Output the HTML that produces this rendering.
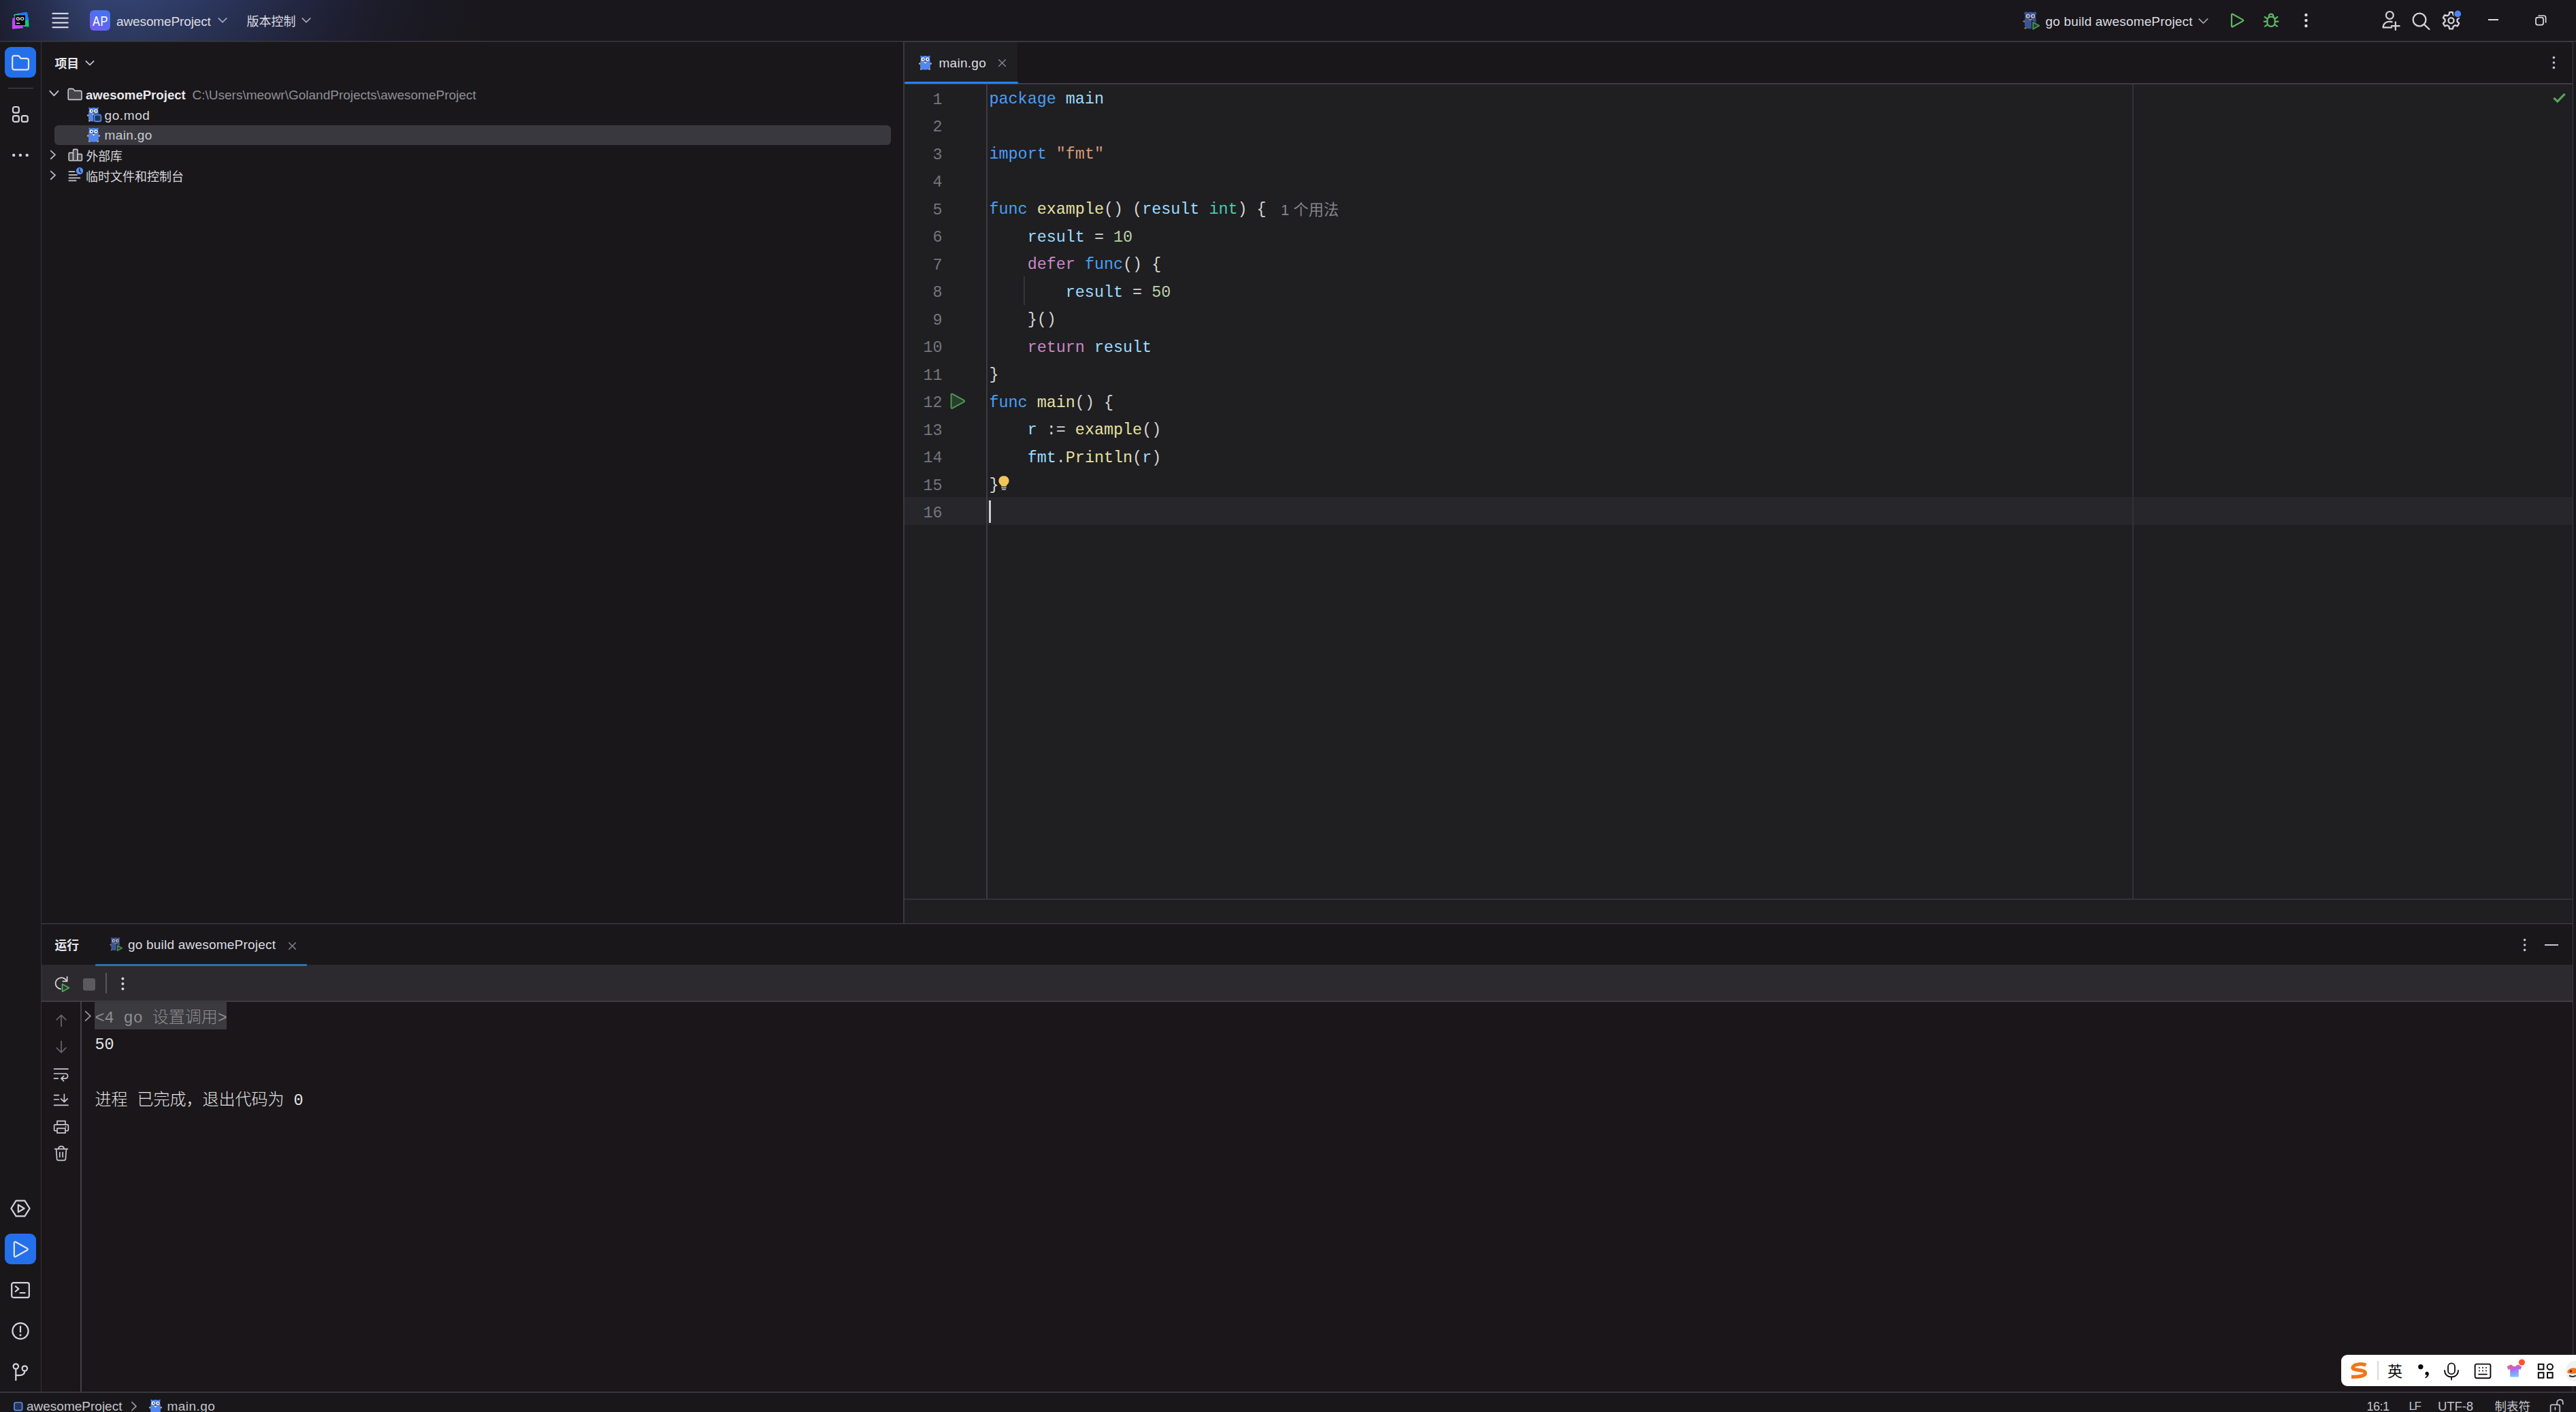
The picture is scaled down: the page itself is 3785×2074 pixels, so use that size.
<!DOCTYPE html>
<html lang="zh-CN">
<head>
<meta charset="utf-8">
<title>awesomeProject – main.go</title>
<style>
html,body{margin:0;padding:0;}
body{width:3785px;height:2074px;position:relative;overflow:hidden;background:#19171a;
  font-family:"Liberation Sans","Noto Sans CJK SC",sans-serif;font-size:19px;color:#d6d6db;}
.abs{position:absolute;}
.ln{position:absolute;background:#3a393e;}
.t{position:absolute;white-space:pre;line-height:30px;height:30px;}
svg{position:absolute;overflow:visible;}
/* title bar */
#titlebar{left:0;top:0;width:3785px;height:60px;
  background:linear-gradient(to right,#1e2035 0px,#283154 70px,#31406d 130px,#324170 200px,#2f3c66 260px,#2a345a 333px,#252a47 410px,#1f2136 488px,#1c1c2a 560px,#1a1921 640px,#19171b 740px);}
#titleshade{left:0;top:0;width:740px;height:60px;background:linear-gradient(to bottom,rgba(25,23,27,0) 0%,rgba(25,23,27,0.22) 100%);}
/* editor */
#editor{left:1329px;top:124px;width:2451px;height:1233px;background:#1f1e21;}
#tabactive{left:1329px;top:62px;width:166px;height:60px;background:#1f1e21;}
.code{position:absolute;left:1453.5px;margin-top:0.7px;white-space:pre;font-family:"Liberation Mono","Noto Sans CJK SC",monospace;font-size:23.4px;line-height:40.5px;height:40.5px;color:#d4d4d4;}
.num{position:absolute;left:1330.5px;margin-top:1px;width:54px;text-align:right;white-space:pre;font-family:"Liberation Mono",monospace;font-size:23.4px;line-height:40.5px;height:40.5px;color:#74757b;}
.k{color:#4a9ff5;}.v{color:#9cdcfe;}.s{color:#d69a78;}.f{color:#e4e0a2;}.ty{color:#4ec9b0;}.n{color:#b9d2a8;}.c{color:#c889c6;}.p{color:#d4d4d4;}
.hint{font-family:"Liberation Sans","Noto Sans CJK SC",sans-serif;font-size:21.5px;color:#85858a;}
/* console */
.con{position:absolute;left:139.5px;white-space:pre;font-family:"Liberation Mono","Noto Sans CJK SC",monospace;font-size:23.4px;line-height:40.5px;height:40.5px;color:#e4e4e8;}
.con .cj{font-size:24px;font-weight:300;}
</style>
</head>
<body>

<!-- ===== TITLE BAR ===== -->
<div id="titlebar" class="abs"></div>
<div id="titleshade" class="abs"></div>
<div class="ln" style="left:0;top:60px;width:3785px;height:1px;background:#3c3b40;box-shadow:0 1px 0 rgba(60,59,64,0.35);"></div>
<div class="ln" style="left:1329px;top:61px;width:2451px;height:1px;background:#37363b;"></div>

<!-- ===== STRUCTURE LINES / PANELS (filled in below) ===== -->
<div id="editor" class="abs"></div>
<div id="tabactive" class="abs"></div>


<!-- ===== FRAME LINES ===== -->
<div class="ln" style="left:60px;top:61px;width:1px;height:1984px;background:#353439;"></div>
<div class="ln" style="left:1327px;top:61px;width:2px;height:1296px;background:#39383d;"></div>
<div class="ln" style="left:1329px;top:122px;width:2451px;height:2px;background:#3d3c41;"></div>
<div class="ln" style="left:1449px;top:124px;width:2px;height:1197px;background:#3d3c41;"></div>
<div class="ln" style="left:3133px;top:124px;width:2px;height:1197px;background:#333236;"></div>
<div class="ln" style="left:1329px;top:1320px;width:2451px;height:1px;background:#3c3b40;box-shadow:0 1px 0 rgba(60,59,64,0.35);"></div>
<div class="ln" style="left:61px;top:1356px;width:3719px;height:1px;background:#3c3b40;box-shadow:0 1px 0 rgba(60,59,64,0.35);"></div>
<div class="abs" style="left:61px;top:1472px;width:3719px;height:572px;background:#1a1619;"></div>
<div class="abs" style="left:61px;top:1417px;width:3719px;height:53px;background:#2c2a2e;"></div>
<div class="ln" style="left:61px;top:1470px;width:3719px;height:1px;background:#4b4a4f;box-shadow:0 1px 0 rgba(75,74,79,0.35);"></div>
<div class="ln" style="left:118px;top:1471px;width:2px;height:574px;background:#414045;"></div>
<div class="ln" style="left:3780px;top:61px;width:1px;height:1984px;background:#3b3a3f;"></div>
<div class="ln" style="left:0;top:2044px;width:3785px;height:2px;background:#38373c;"></div>


<!-- ===== TITLE BAR CONTENT ===== -->
<!-- GoLand logo -->
<svg style="left:17px;top:17px;" width="26" height="26" viewBox="0 0 26 26">
  <defs>
    <linearGradient id="lg1" x1="0" y1="1" x2="1" y2="0"><stop offset="0" stop-color="#e040fb"/><stop offset="0.55" stop-color="#a44df5"/><stop offset="1" stop-color="#3d7bff"/></linearGradient>
    <linearGradient id="lg2" x1="0" y1="0" x2="1" y2="1"><stop offset="0" stop-color="#12d98c"/><stop offset="1" stop-color="#0fc47d"/></linearGradient>
  </defs>
  <path d="M3 4.5 L9.5 3 L22.5 1 L25 12 L25.5 22.5 L19 22 L9 18 Z" fill="url(#lg2)"/>
  <path d="M11 2.5 L23 0.8 L25 12 L17 14 L10 9 Z" fill="#1f7bff"/>
  <path d="M1.5 9.5 L8 7 L19 12 L16.5 24.5 L1 25.5 L0.8 17 Z" fill="url(#lg1)"/>
  <rect x="5.3" y="5.3" width="14.6" height="14.6" fill="#000"/>
  <text x="6.5" y="12.6" font-family="Liberation Sans,sans-serif" font-weight="700" font-size="7.6" fill="#fff" textLength="12" lengthAdjust="spacingAndGlyphs">GO</text>
  <rect x="7" y="16.6" width="5.4" height="1.2" fill="#fff"/>
</svg>
<!-- hamburger -->
<svg style="left:76px;top:18px;" width="26" height="24" viewBox="0 0 26 24"><g stroke="#d4d4de" stroke-width="2.3" stroke-linecap="round"><path d="M1.5 1.9H23.7M1.5 8.6H23.7M1.5 15.3H23.7M1.5 22.1H23.7"/></g></svg>
<!-- project badge -->
<div class="abs" style="left:132px;top:15px;width:30px;height:30px;border-radius:6px;background:linear-gradient(35deg,#7a5af0 0%,#5b69f2 45%,#3b78f2 100%);"></div>
<div class="t" id="tAP" style="left:136px;top:15.5px;color:#fff;font-size:19.5px;letter-spacing:0.6px;transform:scaleX(0.84);transform-origin:left center;">AP</div>
<div class="t" id="tProj" style="left:171px;top:17px;color:#dcdce2;letter-spacing:-0.12px;">awesomeProject</div>
<svg style="left:320px;top:25px;" width="14" height="10" viewBox="0 0 14 10"><path d="M1.2 1.8L7 7.6L12.8 1.8" fill="none" stroke="#a4a8bc" stroke-width="1.7" stroke-linecap="round" stroke-linejoin="round"/></svg>
<div class="t" id="tVcs" style="left:362.5px;top:17px;color:#dcdce2;font-size:18px;">版本控制</div>
<svg style="left:443px;top:25px;" width="14" height="10" viewBox="0 0 14 10"><path d="M1.2 1.8L7 7.6L12.8 1.8" fill="none" stroke="#a4a8bc" stroke-width="1.7" stroke-linecap="round" stroke-linejoin="round"/></svg>

<!-- run configuration icon (dim gopher + play) -->
<svg style="left:2971.5px;top:16px;" width="29" height="30" viewBox="0 0 27 28">
  <circle cx="4.4" cy="3.4" r="2.3" fill="#3a5596"/><circle cx="16.6" cy="3.4" r="2.3" fill="#3a5596"/>
  <path d="M3 10C3 3.5 6.5 1.4 10.5 1.4S18 3.5 18 10L18.4 19C18.4 23 15 24.6 10.5 24.6S2.6 23 2.6 19Z" fill="#3a5596"/>
  <circle cx="7" cy="7" r="2.9" fill="#b4b8c6"/><circle cx="14" cy="7" r="2.9" fill="#b4b8c6"/>
  <circle cx="7.4" cy="7.1" r="1.1" fill="#222"/><circle cx="14.2" cy="7.1" r="1.1" fill="#222"/>
  <ellipse cx="10.5" cy="11.7" rx="2" ry="1.3" fill="#a8876f"/><ellipse cx="10.5" cy="10.3" rx="1.1" ry="0.8" fill="#111"/>
  <ellipse cx="2" cy="14.4" rx="1.7" ry="1.3" fill="#8f735f"/><ellipse cx="3.8" cy="23.6" rx="1.6" ry="1.3" fill="#8f735f"/>
  <path d="M12 12.5L25.3 20L12 27.5Z" fill="#19171b"/>
  <path d="M14.2 15.6L22.6 20.3L14.2 25Z" fill="#24402a" stroke="#4c9455" stroke-width="1.7" stroke-linejoin="round"/>
</svg>
<div class="t" id="tRunCfg" style="left:3005.5px;top:17px;color:#dcdce2;letter-spacing:0.17px;">go build awesomeProject</div>
<svg style="left:3230px;top:26px;" width="15" height="10" viewBox="0 0 15 10"><path d="M1.2 1.8L7.4 8L13.6 1.8" fill="none" stroke="#a8a8b0" stroke-width="1.7" stroke-linecap="round" stroke-linejoin="round"/></svg>
<!-- run -->
<svg style="left:3277px;top:19px;" width="22" height="22" viewBox="0 0 22 22"><path d="M2 2.6C2 1.8 2.9 1.4 3.6 1.8L18.6 10.1C19.3 10.5 19.3 11.5 18.6 11.9L3.6 20.2C2.9 20.6 2 20.2 2 19.4Z" fill="none" stroke="#5fb865" stroke-width="2.2" stroke-linejoin="round"/></svg>
<!-- debug -->
<svg style="left:3325px;top:18px;" width="24" height="24" viewBox="0 0 24 24"><g fill="none" stroke="#5fb865" stroke-width="2.2" stroke-linecap="round" stroke-linejoin="round">
  <path d="M6.3 12.2C6.3 8.6 8.7 6.6 12 6.6S17.7 8.6 17.7 12.2V14.6C17.7 18.4 15.3 20.9 12 20.9S6.3 18.4 6.3 14.6Z"/>
  <path d="M8.6 6.9C8.6 4.2 10 2.6 12 2.6S15.4 4.2 15.4 6.9"/>
  <path d="M6.3 13.6H1.6M17.7 13.6H22.4M6.6 9.6L2.6 6.8M17.4 9.6L21.4 6.8M7 17.8L3 20.6M17 17.8L21 20.6"/></g></svg>
<!-- more -->
<svg style="left:3384px;top:18px;" width="9" height="24" viewBox="0 0 9 24"><g fill="#dcdce2"><circle cx="4.4" cy="4" r="2.2"/><circle cx="4.4" cy="12" r="2.2"/><circle cx="4.4" cy="20" r="2.2"/></g></svg>
<!-- add user -->
<svg style="left:3499px;top:15px;" width="29" height="31" viewBox="0 0 29 31"><g fill="none" stroke="#d4d4dc" stroke-width="2.2" stroke-linecap="round" stroke-linejoin="round">
  <circle cx="12.3" cy="7.4" r="5.4"/><path d="M15 25.4H2.6C2.6 20 6.6 16.6 12.3 16.6C13.6 16.6 14.6 16.8 15.6 17.1"/><path d="M20.8 17.4V29M15 23.2H26.6"/></g></svg>
<!-- search -->
<svg style="left:3543px;top:17px;" width="29" height="28" viewBox="0 0 29 28"><g fill="none" stroke="#d4d4dc" stroke-width="2.3" stroke-linecap="round"><circle cx="12" cy="12" r="9.4"/><path d="M18.8 18.8L26.4 26"/></g></svg>
<!-- settings gear -->
<svg style="left:3587px;top:15px;" width="30" height="30" viewBox="0 0 30 30"><g fill="none" stroke="#d4d4dc" stroke-width="2.3" stroke-linejoin="round">
  <path d="M12.2 2.6H16.8L17.7 6.3L20.3 7.8L23.9 6.7L26.2 10.7L23.5 13.3V16.3L26.2 18.9L23.9 22.9L20.3 21.8L17.7 23.3L16.8 27H12.2L11.3 23.3L8.7 21.8L5.1 22.9L2.8 18.9L5.5 16.3V13.3L2.8 10.7L5.1 6.7L8.7 7.8L11.3 6.3Z" transform="translate(0,0.4)"/>
  <circle cx="14.5" cy="15.2" r="4"/></g>
  <circle cx="24.2" cy="5.4" r="6.2" fill="#19171b"/><circle cx="24.2" cy="5.4" r="4.9" fill="#4a86f7"/></svg>
<!-- window controls -->
<div class="abs" style="left:3656px;top:28px;width:15px;height:2px;background:#dcdce2;"></div>
<svg style="left:3725px;top:22px;" width="17" height="16" viewBox="0 0 17 16"><g fill="none" stroke="#dcdce2" stroke-width="1.7" stroke-linejoin="round"><rect x="1" y="3.6" width="11" height="11" rx="2.6"/><path d="M4.4 1H12.4C14.4 1 15.6 2.2 15.6 4.2V11.6"/></g></svg>


<!-- ===== LEFT STRIPE ===== -->
<div class="abs" style="left:7px;top:69px;width:46px;height:45px;border-radius:9px;background:#2470eb;"></div>
<svg style="left:16px;top:79px;" width="28" height="26" viewBox="0 0 28 26"><path d="M2.2 5.6C2.2 3.9 3.3 2.8 5 2.8H10.2C11 2.8 11.6 3.1 12.1 3.7L14.6 6.8H23.2C24.9 6.8 26 7.9 26 9.6V20.6C26 22.3 24.9 23.4 23.2 23.4H5C3.3 23.4 2.2 22.3 2.2 20.6Z" fill="none" stroke="#e4e4ea" stroke-width="2.2" stroke-linejoin="round"/></svg>
<div class="ln" style="left:12px;top:129px;width:37px;height:1px;background:#4a494e;"></div>
<svg style="left:17px;top:155px;" width="26" height="26" viewBox="0 0 26 26"><g fill="none" stroke="#d4d4dc" stroke-width="2.2"><rect x="2" y="2" width="8.8" height="8.6" rx="2.4"/><rect x="2" y="15.2" width="8.8" height="8.6" rx="2.4"/><rect x="14.9" y="15.2" width="8.8" height="8.6" rx="2.4"/></g></svg>
<svg style="left:17px;top:224px;" width="26" height="8" viewBox="0 0 26 8"><g fill="#d4d4dc"><circle cx="3.2" cy="3.9" r="2.2"/><circle cx="12.9" cy="3.9" r="2.2"/><circle cx="22.7" cy="3.9" r="2.2"/></g></svg>
<!-- bottom group -->
<svg style="left:14px;top:1761px;" width="32" height="28" viewBox="0 0 32 28"><g fill="none" stroke="#d4d4dc" stroke-width="2.2" stroke-linejoin="round"><path d="M9.6 2.6H22.4L29.6 14L22.4 25.4H9.6L2.4 14Z"/><path d="M12.8 8.6L21.6 14L12.8 19.4Z"/></g></svg>
<div class="abs" style="left:7px;top:1812px;width:46px;height:45px;border-radius:9px;background:#2470eb;"></div>
<svg style="left:18px;top:1821px;" width="26" height="28" viewBox="0 0 26 28"><path d="M2.8 4.4C2.8 3.2 4 2.6 5 3.2L22 12.8C23 13.4 23 14.6 22 15.2L5 24.8C4 25.4 2.8 24.8 2.8 23.6Z" fill="none" stroke="#e4e4ea" stroke-width="2.2" stroke-linejoin="round"/></svg>
<svg style="left:15px;top:1882px;" width="30" height="26" viewBox="0 0 30 26"><g fill="none" stroke="#d4d4dc" stroke-width="2.2" stroke-linecap="round" stroke-linejoin="round"><rect x="2.2" y="2.2" width="25.6" height="21.6" rx="2.6"/><path d="M7.8 7.4L12.4 11.2L7.8 15"/><path d="M14.6 17H21.6"/></g></svg>
<svg style="left:16px;top:1941px;" width="28" height="28" viewBox="0 0 28 28"><g fill="none" stroke="#d4d4dc" stroke-width="2.2" stroke-linecap="round"><circle cx="14" cy="14" r="11.6"/><path d="M14 7.4V15.4"/></g><circle cx="14" cy="20" r="1.6" fill="#d4d4dc"/></svg>
<svg style="left:17px;top:2001px;" width="26" height="28" viewBox="0 0 26 28"><g fill="none" stroke="#d4d4dc" stroke-width="2.2" stroke-linecap="round"><circle cx="6.3" cy="6" r="3.7"/><circle cx="19.3" cy="9" r="3.7"/><path d="M6.3 9.8V26.2"/><path d="M19.3 12.8C19.3 17 16 19.2 11.4 19.2H6.6"/></g></svg>

<!-- ===== PROJECT PANEL ===== -->
<div class="t" id="tProjHdr" style="left:80.5px;top:79px;font-weight:700;font-size:17.8px;color:#e6e6ea;">项目</div>
<svg style="left:125px;top:88px;" width="14" height="10" viewBox="0 0 14 10"><path d="M1.4 1.8L7 7.4L12.6 1.8" fill="none" stroke="#c4c4cc" stroke-width="1.8" stroke-linecap="round" stroke-linejoin="round"/></svg>

<!-- row 1 -->
<svg style="left:72px;top:132px;" width="15" height="11" viewBox="0 0 15 11"><path d="M1.4 1.8L7.4 8.4L13.4 1.8" fill="none" stroke="#c4c4cc" stroke-width="1.9" stroke-linecap="round" stroke-linejoin="round"/></svg>
<svg style="left:99px;top:129px;" width="23" height="19" viewBox="0 0 23 19"><path d="M1.2 3.4C1.2 2.2 2 1.4 3.2 1.4H7.4C8.1 1.4 8.6 1.6 9 2.1L10.9 4.4H19C20.2 4.4 21 5.2 21 6.4V15.4C21 16.6 20.2 17.4 19 17.4H3.2C2 17.4 1.2 16.6 1.2 15.4Z" fill="#45444b" stroke="#c9c9cf" stroke-width="1.6" stroke-linejoin="round"/></svg>
<div class="t" id="tRoot" style="left:126px;top:124.5px;font-weight:700;font-size:18.6px;color:#e8e8ec;">awesomeProject</div>
<div class="t" id="tPath" style="left:282.5px;top:124.5px;color:#8f8f96;">C:\Users\meowr\GolandProjects\awesomeProject</div>
<!-- row 2 -->
<svg style="left:128px;top:157px;" width="19" height="22" viewBox="0 0 19 22">
  <ellipse cx="1.5" cy="12.4" rx="1.6" ry="1.25" fill="#e0b08f"/><ellipse cx="17.5" cy="12.4" rx="1.6" ry="1.25" fill="#e0b08f"/>
  <ellipse cx="3.5" cy="20.4" rx="1.5" ry="1.3" fill="#e0b08f"/><ellipse cx="15.5" cy="20.4" rx="1.5" ry="1.3" fill="#e0b08f"/>
  <path d="M2.2 0.6L6 1.8L3 5Z" fill="#5187f2"/><path d="M16.8 0.6L13 1.8L16 5Z" fill="#5187f2"/>
  <path d="M2.4 8.6C2.4 3 5.6 0.9 9.5 0.9S16.6 3 16.6 8.6L17 16.6C17 20.4 13.6 21.6 9.5 21.6S2 20.4 2 16.6Z" fill="#5187f2"/>
  <circle cx="6.1" cy="5.9" r="2.5" fill="#fff"/><circle cx="12.9" cy="5.9" r="2.5" fill="#fff"/>
  <circle cx="6.5" cy="6" r="1.05" fill="#111"/><circle cx="13.1" cy="6" r="1.05" fill="#111"/>
  <ellipse cx="9.5" cy="10.5" rx="1.9" ry="1.25" fill="#e8c3a6"/><ellipse cx="9.5" cy="9" rx="1.15" ry="0.8" fill="#111"/>
  <rect x="8.9" y="10.9" width="1.2" height="1.2" fill="#fff"/>
</svg>
<svg style="left:137px;top:167px;" width="13" height="13" viewBox="0 0 13 13"><rect x="0" y="0" width="13" height="13" rx="3.4" fill="#19171b"/><rect x="1.6" y="1.6" width="9.8" height="9.8" rx="2.2" fill="#25345a" stroke="#5a8ef5" stroke-width="1.6"/></svg>
<div class="t" id="tGomod" style="left:153.5px;top:154.5px;letter-spacing:0.6px;">go.mod</div>
<!-- row 3 selected -->
<div class="abs" style="left:80px;top:183.5px;width:1229px;height:29.5px;border-radius:6px;background:#39383f;"></div>
<svg style="left:128px;top:187px;" width="19" height="22" viewBox="0 0 19 22">
  <ellipse cx="1.5" cy="12.4" rx="1.6" ry="1.25" fill="#e0b08f"/><ellipse cx="17.5" cy="12.4" rx="1.6" ry="1.25" fill="#e0b08f"/>
  <ellipse cx="3.5" cy="20.4" rx="1.5" ry="1.3" fill="#e0b08f"/><ellipse cx="15.5" cy="20.4" rx="1.5" ry="1.3" fill="#e0b08f"/>
  <path d="M2.2 0.6L6 1.8L3 5Z" fill="#5187f2"/><path d="M16.8 0.6L13 1.8L16 5Z" fill="#5187f2"/>
  <path d="M2.4 8.6C2.4 3 5.6 0.9 9.5 0.9S16.6 3 16.6 8.6L17 16.6C17 20.4 13.6 21.6 9.5 21.6S2 20.4 2 16.6Z" fill="#5187f2"/>
  <circle cx="6.1" cy="5.9" r="2.5" fill="#fff"/><circle cx="12.9" cy="5.9" r="2.5" fill="#fff"/>
  <circle cx="6.5" cy="6" r="1.05" fill="#111"/><circle cx="13.1" cy="6" r="1.05" fill="#111"/>
  <ellipse cx="9.5" cy="10.5" rx="1.9" ry="1.25" fill="#e8c3a6"/><ellipse cx="9.5" cy="9" rx="1.15" ry="0.8" fill="#111"/>
  <rect x="8.9" y="10.9" width="1.2" height="1.2" fill="#fff"/>
</svg>
<div class="t" id="tMaingo" style="left:153.5px;top:184px;color:#c9c9cf;letter-spacing:0.38px;">main.go</div>
<!-- row 4 -->
<svg style="left:73px;top:220px;" width="10" height="15" viewBox="0 0 10 15"><path d="M1.8 1.6L8 7.4L1.8 13.2" fill="none" stroke="#b4b4bc" stroke-width="1.9" stroke-linecap="round" stroke-linejoin="round"/></svg>
<svg style="left:100px;top:218px;" width="22" height="20" viewBox="0 0 22 20"><g fill="#45444b" stroke="#c9c9cf" stroke-width="1.6" stroke-linejoin="round"><rect x="1.2" y="6.4" width="6.4" height="11.6" rx="1.2"/><rect x="7.6" y="1.4" width="6.4" height="16.6" rx="1.2"/><rect x="14" y="8.4" width="6.4" height="9.6" rx="1.2"/></g></svg>
<div class="t" id="tExt" style="left:126.5px;top:214.5px;font-size:17.8px;">外部库</div>
<!-- row 5 -->
<svg style="left:73px;top:250px;" width="10" height="15" viewBox="0 0 10 15"><path d="M1.8 1.6L8 7.4L1.8 13.2" fill="none" stroke="#b4b4bc" stroke-width="1.9" stroke-linecap="round" stroke-linejoin="round"/></svg>
<svg style="left:100px;top:245px;" width="24" height="22" viewBox="0 0 24 22"><g stroke="#c9c9cf" stroke-width="1.7" stroke-linecap="round"><path d="M1.4 7.2H9.6M1.4 11.8H13.2M1.4 16.4H17.4M1.4 20.4H11.6"/></g><circle cx="17" cy="6" r="6.4" fill="#19171b"/><circle cx="17" cy="6" r="5.2" fill="#5a8ef5"/><path d="M16.8 3V6.4L18.8 8" fill="none" stroke="#19171b" stroke-width="1.4" stroke-linecap="round"/></svg>
<div class="t" id="tScratch" style="left:126px;top:245px;font-size:18px;">临时文件和控制台</div>

<!-- ===== EDITOR ===== -->
<svg style="left:1349.5px;top:81px;" width="19" height="22" viewBox="0 0 19 22">
  <ellipse cx="1.5" cy="12.4" rx="1.6" ry="1.25" fill="#e0b08f"/><ellipse cx="17.5" cy="12.4" rx="1.6" ry="1.25" fill="#e0b08f"/>
  <ellipse cx="3.5" cy="20.4" rx="1.5" ry="1.3" fill="#e0b08f"/><ellipse cx="15.5" cy="20.4" rx="1.5" ry="1.3" fill="#e0b08f"/>
  <path d="M2.2 0.6L6 1.8L3 5Z" fill="#5187f2"/><path d="M16.8 0.6L13 1.8L16 5Z" fill="#5187f2"/>
  <path d="M2.4 8.6C2.4 3 5.6 0.9 9.5 0.9S16.6 3 16.6 8.6L17 16.6C17 20.4 13.6 21.6 9.5 21.6S2 20.4 2 16.6Z" fill="#5187f2"/>
  <circle cx="6.1" cy="5.9" r="2.5" fill="#fff"/><circle cx="12.9" cy="5.9" r="2.5" fill="#fff"/>
  <circle cx="6.5" cy="6" r="1.05" fill="#111"/><circle cx="13.1" cy="6" r="1.05" fill="#111"/>
  <ellipse cx="9.5" cy="10.5" rx="1.9" ry="1.25" fill="#e8c3a6"/><ellipse cx="9.5" cy="9" rx="1.15" ry="0.8" fill="#111"/>
  <rect x="8.9" y="10.9" width="1.2" height="1.2" fill="#fff"/>
</svg>
<div class="t" id="tTab" style="left:1379.5px;top:78px;color:#dcdce2;letter-spacing:0.27px;">main.go</div>
<svg style="left:1465.5px;top:85.5px;" width="13" height="13" viewBox="0 0 14 14"><path d="M1.8 1.8L12.2 12.2M12.2 1.8L1.8 12.2" fill="none" stroke="#85858b" stroke-width="1.6" stroke-linecap="round"/></svg>
<div class="abs" style="left:1329px;top:120px;width:167px;height:3px;background:#2382fb;border-radius:2px;"></div>
<svg style="left:3748px;top:80px;" width="9" height="24" viewBox="0 0 9 24"><g fill="#c4c4cc"><circle cx="4.4" cy="4.6" r="1.8"/><circle cx="4.4" cy="12" r="1.8"/><circle cx="4.4" cy="19.4" r="1.8"/></g></svg>
<svg style="left:3750px;top:135px;" width="21" height="17" viewBox="0 0 21 17"><path d="M2.4 8.8L7.8 14L18.6 2.8" fill="none" stroke="#57a35c" stroke-width="3.2" stroke-linejoin="miter"/></svg>
<div class="abs" style="left:1329px;top:730px;width:2451px;height:41px;background:#27262b;"></div>
<div class="ln" style="left:1449px;top:730px;width:2px;height:41px;background:#3d3c41;"></div>
<div class="ln" style="left:3133px;top:730px;width:2px;height:41px;background:#333236;"></div>
<div class="abs" style="left:1453px;top:735px;width:2.5px;height:33px;background:#cfcfd6;"></div>
<div class="ln" style="left:1504px;top:406px;width:2px;height:42px;background:#353439;"></div>
<div class="num" style="top:125.5px;">1</div>
<div class="code" style="top:125.5px;"><span class="k">package</span> <span class="v">main</span></div>
<div class="num" style="top:166.0px;">2</div>
<div class="num" style="top:206.5px;">3</div>
<div class="code" style="top:206.5px;"><span class="k">import</span> <span class="s">"fmt"</span></div>
<div class="num" style="top:247.0px;">4</div>
<div class="num" style="top:287.5px;">5</div>
<div class="code" style="top:287.5px;"><span class="k">func</span> <span class="f">example</span>() (<span class="v">result</span> <span class="ty">int</span>) {<span class="hint" id="tHint" style="position:absolute;left:428.5px;top:1px;font-size:22.2px;">1 个用法</span></div>
<div class="num" style="top:328.0px;">6</div>
<div class="code" style="top:328.0px;">    <span class="v">result</span> = <span class="n">10</span></div>
<div class="num" style="top:368.5px;">7</div>
<div class="code" style="top:368.5px;">    <span class="c">defer</span> <span class="k">func</span>() {</div>
<div class="num" style="top:409.0px;">8</div>
<div class="code" style="top:409.0px;">        <span class="v">result</span> = <span class="n">50</span></div>
<div class="num" style="top:449.5px;">9</div>
<div class="code" style="top:449.5px;">    }()</div>
<div class="num" style="top:490.0px;">10</div>
<div class="code" style="top:490.0px;">    <span class="c">return</span> <span class="v">result</span></div>
<div class="num" style="top:530.5px;">11</div>
<div class="code" style="top:530.5px;">}</div>
<div class="num" style="top:571.0px;">12</div>
<div class="code" style="top:571.0px;"><span class="k">func</span> <span class="f">main</span>() {</div>
<div class="num" style="top:611.5px;">13</div>
<div class="code" style="top:611.5px;">    <span class="v">r</span> := <span class="f">example</span>()</div>
<div class="num" style="top:652.0px;">14</div>
<div class="code" style="top:652.0px;">    <span class="v">fmt</span>.<span class="f">Println</span>(<span class="v">r</span>)</div>
<div class="num" style="top:692.5px;">15</div>
<div class="code" style="top:692.5px;">}</div>
<div class="num" style="top:733.0px;">16</div>
<svg style="left:1395px;top:576px;" width="26" height="27" viewBox="0 0 26 26"><path d="M2.6 3.2C2.6 2.2 3.6 1.7 4.4 2.2L21.6 11.7C22.4 12.2 22.4 13.2 21.6 13.7L4.4 23.2C3.6 23.7 2.6 23.2 2.6 22.2Z" fill="#253f2b" stroke="#4f9a57" stroke-width="1.9" stroke-linejoin="round"/></svg>
<svg style="left:1466px;top:698px;" width="18" height="24" viewBox="0 0 18 24"><path d="M9 1C4.6 1 1.4 4.2 1.4 8.2C1.4 10.8 2.8 12.8 4.4 14.2C5 14.8 5.4 15.6 5.4 16.4H12.6C12.6 15.6 13 14.8 13.6 14.2C15.2 12.8 16.6 10.8 16.6 8.2C16.6 4.2 13.4 1 9 1Z" fill="#f2c55c"/><path d="M5.8 18.6H12.2M6.6 21H11.4" stroke="#c9c9cf" stroke-width="1.5" stroke-linecap="round"/></svg>


<!-- ===== RUN TOOL WINDOW ===== -->
<div class="t" id="tRunHdr" style="left:80.5px;top:1374px;font-weight:700;font-size:17.8px;color:#e6e6ea;">运行</div>
<svg style="left:161px;top:1376px;" width="22" height="23" viewBox="0 0 27 28">
  <circle cx="4.4" cy="3.4" r="2.3" fill="#3a5596"/><circle cx="16.6" cy="3.4" r="2.3" fill="#3a5596"/>
  <path d="M3 10C3 3.5 6.5 1.4 10.5 1.4S18 3.5 18 10L18.4 19C18.4 23 15 24.6 10.5 24.6S2.6 23 2.6 19Z" fill="#3a5596"/>
  <circle cx="7" cy="7" r="2.9" fill="#b4b8c6"/><circle cx="14" cy="7" r="2.9" fill="#b4b8c6"/>
  <circle cx="7.4" cy="7.1" r="1.1" fill="#222"/><circle cx="14.2" cy="7.1" r="1.1" fill="#222"/>
  <ellipse cx="10.5" cy="11.7" rx="2" ry="1.3" fill="#a8876f"/><ellipse cx="10.5" cy="10.3" rx="1.1" ry="0.8" fill="#111"/>
  <ellipse cx="2" cy="14.4" rx="1.7" ry="1.3" fill="#8f735f"/><ellipse cx="3.8" cy="23.6" rx="1.6" ry="1.3" fill="#8f735f"/>
  <path d="M12 12.5L25.3 20L12 27.5Z" fill="#19171b"/>
  <path d="M14.2 15.6L22.6 20.3L14.2 25Z" fill="#24402a" stroke="#4c9455" stroke-width="1.7" stroke-linejoin="round"/>
</svg>
<div class="t" id="tRunTab" style="left:188px;top:1373px;color:#dcdce2;letter-spacing:0.21px;">go build awesomeProject</div>
<svg style="left:422.5px;top:1382.5px;" width="13" height="13" viewBox="0 0 14 14"><path d="M1.8 1.8L12.2 12.2M12.2 1.8L1.8 12.2" fill="none" stroke="#85858b" stroke-width="1.6" stroke-linecap="round"/></svg>
<div class="abs" style="left:139.5px;top:1416px;width:311.5px;height:3px;background:#2b72b2;border-radius:1px;"></div>
<svg style="left:3705px;top:1376px;" width="9" height="24" viewBox="0 0 9 24"><g fill="#c4c4cc"><circle cx="4.6" cy="4.6" r="1.8"/><circle cx="4.6" cy="12" r="1.8"/><circle cx="4.6" cy="19.4" r="1.8"/></g></svg>
<div class="abs" style="left:3739px;top:1387px;width:20px;height:2px;background:#c9c9cf;"></div>
<!-- toolbar -->
<svg style="left:80px;top:1433px;" width="24" height="25" viewBox="0 0 24 25"><g fill="none" stroke="#d4d4dc" stroke-width="1.8" stroke-linecap="round" stroke-linejoin="round"><path d="M9.2 19.6C4.8 19 1.6 15.6 1.6 11.4C1.6 6.8 5.4 3.2 10 3.2C13.4 3.2 16.2 5 17.6 7.8"/><path d="M18.6 2V8.4H12.4"/></g><path d="M11.6 12.6L21.4 18L11.6 23.4Z" fill="#23402a" stroke="#57a85f" stroke-width="1.7" stroke-linejoin="round"/></svg>
<div class="abs" style="left:122px;top:1436.5px;width:18px;height:18px;border-radius:3px;background:#5b5a5f;"></div>
<div class="ln" style="left:155px;top:1429px;width:2px;height:30px;background:#58575c;"></div>
<svg style="left:175.5px;top:1433px;" width="9" height="24" viewBox="0 0 9 24"><g fill="#d4d4dc"><circle cx="4.4" cy="4.6" r="2"/><circle cx="4.4" cy="12" r="2"/><circle cx="4.4" cy="19.6" r="2"/></g></svg>
<!-- console side icons -->
<svg style="left:80px;top:1489px;" width="20" height="20" viewBox="0 0 20 20"><path d="M10 18.6V2.2M3.2 8.8L10 2L16.8 8.8" fill="none" stroke="#67666c" stroke-width="1.7" stroke-linecap="round" stroke-linejoin="round"/></svg>
<svg style="left:80px;top:1528px;" width="20" height="20" viewBox="0 0 20 20"><path d="M10 1.4V17.8M3.2 11.2L10 18L16.8 11.2" fill="none" stroke="#67666c" stroke-width="1.7" stroke-linecap="round" stroke-linejoin="round"/></svg>
<svg style="left:78px;top:1568px;" width="24" height="21" viewBox="0 0 24 21"><g fill="none" stroke="#c9c9cf" stroke-width="1.7" stroke-linecap="round" stroke-linejoin="round"><path d="M1.6 2.2H22"/><path d="M1.6 9H17.6C20 9 21.6 10.6 21.6 12.6S20 16.2 17.6 16.2H12.4"/><path d="M15.6 12.6L12 16.2L15.6 19.8"/><path d="M1.6 16.2H7.2"/></g></svg>
<svg style="left:78px;top:1606px;" width="24" height="20" viewBox="0 0 24 20"><g fill="none" stroke="#c9c9cf" stroke-width="1.7" stroke-linecap="round" stroke-linejoin="round"><path d="M1.6 2.6H8.4M1.6 9H8.4M1.6 17.4H22"/><path d="M16.4 1.4V12.4M11.6 7.8L16.4 12.6L21.2 7.8"/></g></svg>
<svg style="left:78px;top:1645px;" width="24" height="21" viewBox="0 0 24 21"><g fill="none" stroke="#c9c9cf" stroke-width="1.7" stroke-linejoin="round"><path d="M6 6.6V1.6H18V6.6"/><path d="M6 16H3.6C2.4 16 1.6 15.2 1.6 14V8.8C1.6 7.6 2.4 6.8 3.6 6.8H20.4C21.6 6.8 22.4 7.6 22.4 8.8V14C22.4 15.2 21.6 16 20.4 16H18"/><rect x="6" y="12.4" width="12" height="6.8"/></g><circle cx="18.6" cy="10" r="1" fill="#c9c9cf"/></svg>
<svg style="left:79px;top:1682px;" width="22" height="24" viewBox="0 0 22 24"><g fill="none" stroke="#c9c9cf" stroke-width="1.7" stroke-linecap="round" stroke-linejoin="round"><path d="M1.6 5.6H20.4"/><path d="M7 5.4C7 3 8.4 1.6 11 1.6S15 3 15 5.4"/><path d="M3.6 5.8L4.6 20C4.7 21.4 5.6 22.4 7 22.4H15C16.4 22.4 17.3 21.4 17.4 20L18.4 5.8"/><path d="M8.8 10.6V17.4M13.2 10.6V17.4"/></g></svg>
<!-- console text -->
<svg style="left:124px;top:1484px;" width="11" height="17" viewBox="0 0 11 17"><path d="M1.6 1.6L8.8 8.4L1.6 15.2" fill="none" stroke="#9a9aa0" stroke-width="1.7" stroke-linecap="round" stroke-linejoin="round"/></svg>
<div class="abs" style="left:139px;top:1471.5px;width:194px;height:40px;background:#3b3a3f;"></div>
<div class="con" id="cL1" style="top:1476px;color:#8d8d93;">&lt;4 go <span class="cj">设置调用</span>&gt;</div>
<div class="con" id="cL2" style="top:1514.5px;">50</div>
<div class="con" id="cL4" style="top:1597px;"><span class="cj">进程</span> <span class="cj">已完成，退出代码为</span> 0</div>

<!-- ===== STATUS BAR ===== -->
<svg style="left:20px;top:2059px;" width="14" height="14" viewBox="0 0 14 14"><rect x="1" y="1" width="11.6" height="11.6" rx="2.4" fill="#25345a" stroke="#5a8ef5" stroke-width="1.7"/></svg>
<div class="t" id="tSbProj" style="left:39px;top:2051px;color:#c4c4cc;">awesomeProject</div>
<svg style="left:192px;top:2058px;" width="10" height="15" viewBox="0 0 10 15"><path d="M1.8 1.6L8 7.6L1.8 13.6" fill="none" stroke="#9a9aa0" stroke-width="1.7" stroke-linecap="round" stroke-linejoin="round"/></svg>
<svg style="left:219px;top:2055px;" width="19" height="22" viewBox="0 0 19 22">
  <ellipse cx="1.5" cy="12.4" rx="1.6" ry="1.25" fill="#e0b08f"/><ellipse cx="17.5" cy="12.4" rx="1.6" ry="1.25" fill="#e0b08f"/>
  <ellipse cx="3.5" cy="20.4" rx="1.5" ry="1.3" fill="#e0b08f"/><ellipse cx="15.5" cy="20.4" rx="1.5" ry="1.3" fill="#e0b08f"/>
  <path d="M2.2 0.6L6 1.8L3 5Z" fill="#5187f2"/><path d="M16.8 0.6L13 1.8L16 5Z" fill="#5187f2"/>
  <path d="M2.4 8.6C2.4 3 5.6 0.9 9.5 0.9S16.6 3 16.6 8.6L17 16.6C17 20.4 13.6 21.6 9.5 21.6S2 20.4 2 16.6Z" fill="#5187f2"/>
  <circle cx="6.1" cy="5.9" r="2.5" fill="#fff"/><circle cx="12.9" cy="5.9" r="2.5" fill="#fff"/>
  <circle cx="6.5" cy="6" r="1.05" fill="#111"/><circle cx="13.1" cy="6" r="1.05" fill="#111"/>
  <ellipse cx="9.5" cy="10.5" rx="1.9" ry="1.25" fill="#e8c3a6"/><ellipse cx="9.5" cy="9" rx="1.15" ry="0.8" fill="#111"/>
  <rect x="8.9" y="10.9" width="1.2" height="1.2" fill="#fff"/>
</svg>
<div class="t" id="tSbFile" style="left:245.5px;top:2051px;color:#c4c4cc;letter-spacing:0.45px;">main.go</div>
<div class="t" id="tSbPos" style="left:3477.5px;top:2051px;color:#c4c4cc;font-size:18px;letter-spacing:-0.5px;">16:1</div>
<div class="t" id="tSbLF" style="left:3539.5px;top:2051px;color:#c4c4cc;font-size:17px;letter-spacing:-1.5px;">LF</div>
<div class="t" id="tSbEnc" style="left:3582px;top:2051px;color:#c4c4cc;font-size:18.5px;letter-spacing:-0.1px;">UTF-8</div>
<div class="t" id="tSbTab" style="left:3665.5px;top:2051px;color:#c4c4cc;font-size:17.5px;">制表符</div>
<svg style="left:3746px;top:2054px;" width="22" height="24" viewBox="0 0 22 24"><g fill="none" stroke="#c4c4cc" stroke-width="1.7" stroke-linecap="round" stroke-linejoin="round"><rect x="1.6" y="9.4" width="13.6" height="12" rx="2.2"/><path d="M11 9.2V6.4C11 3.6 12.8 1.8 15.4 1.8S19.8 3.6 19.8 6.4V8.4"/><path d="M8.4 13.4V16.6"/></g></svg>

<!-- ===== IME FLOATING BAR ===== -->
<div class="abs" style="left:3439.5px;top:1990px;width:360px;height:46px;border-radius:9px;background:#ffffff;"></div>
<svg style="left:3451px;top:2000px;" width="30" height="27" viewBox="0 0 30 27"><path d="M25.4 5.2C19.4 2.6 7.4 3.4 6 8.6C4.8 13.6 24 11 24.4 16.6C24.8 21.4 13.6 22.6 4 22.4" fill="none" stroke="#f0761b" stroke-width="5.2" stroke-linecap="butt" stroke-linejoin="round"/></svg>
<div class="abs" style="left:3493px;top:1999px;width:1.5px;height:28px;background:#d9d9d9;"></div>
<div class="t" id="tImeEn" style="left:3508px;top:1999.5px;color:#0a0a0a;font-size:22px;">英</div>
<svg style="left:3551px;top:2002px;" width="20" height="26" viewBox="0 0 20 26"><circle cx="5.8" cy="5.6" r="3.7" fill="#0a0a0a"/><path d="M12.4 15.4C12.4 13.8 13.6 12.8 15 12.8C16.8 12.8 17.8 14.2 17.8 16C17.8 18.8 15.8 21.4 12.8 22.4L12.2 21C13.8 20.2 14.8 19 14.8 17.8C13.4 17.8 12.4 16.8 12.4 15.4Z" fill="#0a0a0a"/></svg>
<svg style="left:3590px;top:2001px;" width="24" height="27" viewBox="0 0 24 27"><g fill="none" stroke="#0a0a0a" stroke-width="1.8" stroke-linecap="round"><rect x="7" y="1.4" width="10" height="16" rx="5"/><path d="M2 12C2 17.6 6 21.4 12 21.4S22 17.6 22 12"/><path d="M12 21.6V25.6"/></g></svg>
<svg style="left:3635px;top:2002px;" width="26" height="24" viewBox="0 0 26 24"><g fill="none" stroke="#0a0a0a" stroke-width="1.9" stroke-linejoin="round" stroke-linecap="round"><rect x="1.6" y="1.6" width="22.8" height="20.6" rx="2.4"/><path d="M7 16.6H19"/></g><g fill="#0a0a0a"><circle cx="8" cy="7" r="1"/><circle cx="13" cy="7" r="1"/><circle cx="18" cy="7" r="1"/><circle cx="8" cy="11.4" r="1"/><circle cx="13" cy="11.4" r="1"/><circle cx="18" cy="11.4" r="1"/></g></svg>
<svg style="left:3682px;top:1995px;" width="30" height="30" viewBox="0 0 30 30"><defs><linearGradient id="shirt" x1="0" y1="0" x2="0.25" y2="1"><stop offset="0" stop-color="#ff5a4f"/><stop offset="0.45" stop-color="#b565f0"/><stop offset="1" stop-color="#6cc6ff"/></linearGradient></defs>
  <path d="M6.4 9.4C8.4 9.4 9.4 10.4 9.4 10.4C10.6 12.4 14.4 12.4 15.6 10.4C15.6 10.4 16.6 9.4 18.6 9.4L23.4 12.4L21.4 17L18.8 16V27.6H6.2V16L3.6 17L1.6 12.4Z" fill="url(#shirt)"/>
  <circle cx="23.4" cy="6" r="4.6" fill="#ff5233"/></svg>
<svg style="left:3728px;top:2002px;" width="25" height="24" viewBox="0 0 25 24"><g fill="none" stroke="#0a0a0a" stroke-width="2"><rect x="1.8" y="1.8" width="7.6" height="7.6"/><rect x="1.8" y="14.2" width="7.6" height="7.6"/><rect x="15" y="14.2" width="7.6" height="7.6"/><circle cx="18.8" cy="5.6" r="4.2"/></g></svg>
<svg style="left:3768px;top:1997px;" width="34" height="34" viewBox="0 0 34 34"><circle cx="17" cy="17" r="15.4" fill="#f1f1f3"/><path d="M4.6 16.6C8 12 14 11.4 17.6 13.4L17 20C13 21.4 7.6 21 4.4 19.6Z" fill="#f0761b"/><circle cx="9.4" cy="17" r="1.6" fill="#222"/><path d="M7 23.4C10 25.4 14 25.4 17 23.4" stroke="#333" stroke-width="2" fill="none"/></svg>

</body>
</html>
